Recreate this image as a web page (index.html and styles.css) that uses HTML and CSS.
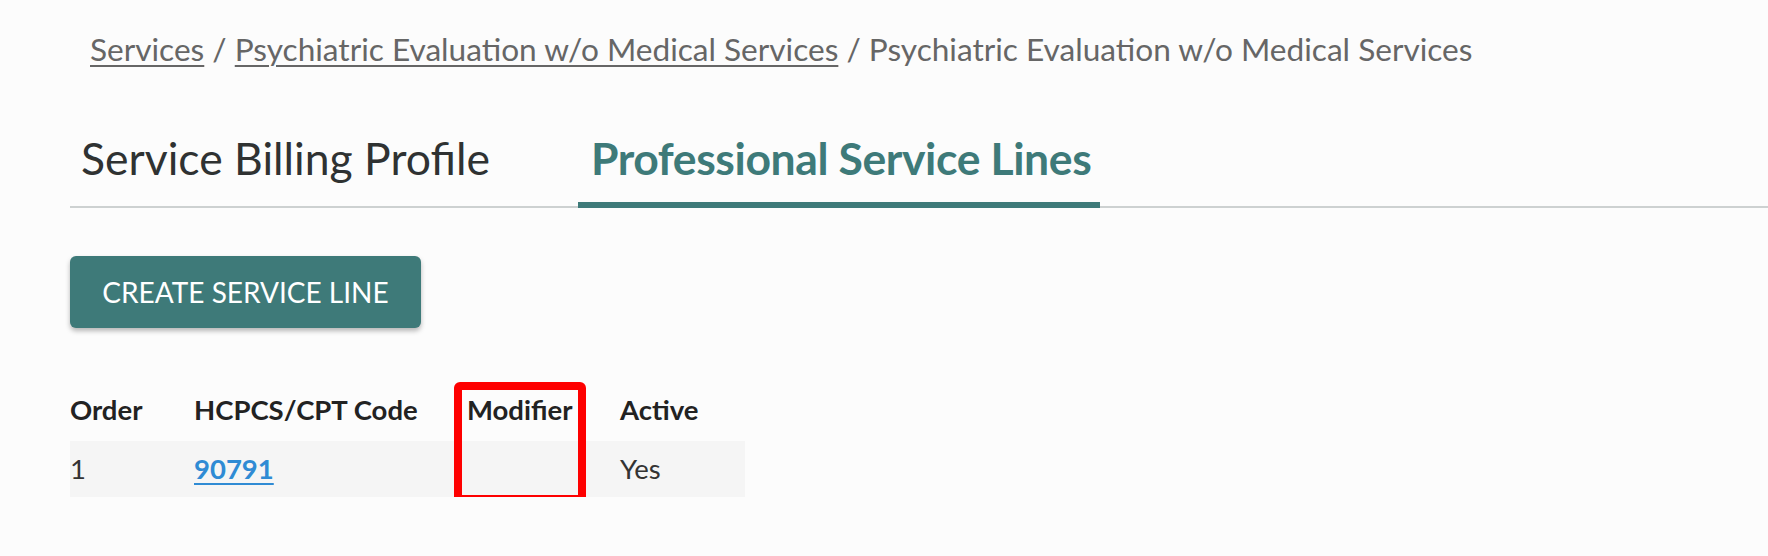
FILE: index.html
```html
<!DOCTYPE html>
<html lang="en">
<head>
<meta charset="utf-8">
<title>Professional Service Lines</title>
<link rel="stylesheet" href="styles.css">
</head>
<body>
<main class="page">
  <nav class="breadcrumb">
    <a href="#" class="crumb-link">Services</a> / <a href="#" class="crumb-link">Psychiatric Evaluation w/o Medical Services</a> / <span class="crumb-current">Psychiatric Evaluation w/o Medical Services</span>
  </nav>

  <div class="tabs">
    <div class="tab">Service Billing Profile</div>
    <div class="tab tab-active">Professional Service Lines</div>
  </div>

  <button class="btn-create" type="button">Create Service Line</button>

  <div class="table-wrap">
    <table class="lines">
      <colgroup>
        <col class="c-order">
        <col class="c-code">
        <col class="c-mod">
        <col class="c-active">
      </colgroup>
      <thead>
        <tr>
          <th>Order</th>
          <th>HCPCS/CPT Code</th>
          <th>Modifier</th>
          <th>Active</th>
        </tr>
      </thead>
      <tbody>
        <tr>
          <td>1</td>
          <td><a href="#" class="code-link">90791</a></td>
          <td></td>
          <td>Yes</td>
        </tr>
      </tbody>
    </table>
    <div class="highlight"></div>
  </div>
</main>
</body>
</html>
```

FILE: styles.css
```css
html, body {
  margin: 0;
  padding: 0;
  background: #fcfcfc;
}

body {
  font-family: Lato, "Open Sans", "Liberation Sans", sans-serif;
  color: #333;
}

.page {
  padding-left: 70px;
}

.breadcrumb {
  padding-top: 30px;
  padding-left: 20px;
  font-size: 31.6px;
  line-height: 38px;
  color: #666;
}

.crumb-link {
  color: #666;
  text-decoration: underline;
  text-decoration-thickness: 2px;
  text-underline-offset: 4px;
}

.crumb-current {
  color: #666;
}

.tabs {
  display: flex;
  gap: 77px;
  margin-top: 63px;
  border-bottom: 2px solid #cdd1d1;
}

.tab {
  padding: 0 11px 17px;
  font-size: 44.5px;
  line-height: 54px;
  color: #2f3232;
  border-bottom: 6px solid transparent;
  margin-bottom: -2px;
}

.tab-active {
  color: #3e7a79;
  font-weight: 700;
  letter-spacing: -0.4px;
  border-bottom-color: #3e7a79;
  padding-left: 13px;
  padding-right: 9px;
}

.btn-create {
  display: block;
  margin-top: 48px;
  width: 351px;
  height: 72px;
  padding: 0;
  border: none;
  border-radius: 6px;
  background: #3e7a79;
  color: #fff;
  font-family: Lato, "Open Sans", "Liberation Sans", sans-serif;
  font-size: 28px;
  line-height: 72px;
  text-transform: uppercase;
  box-shadow: 0 3px 5px rgba(0, 0, 0, 0.28);
}

.table-wrap {
  position: relative;
  margin-top: 53px;
  width: 675px;
}

.lines {
  border-collapse: collapse;
  width: 675px;
  table-layout: fixed;
  font-size: 27.5px;
  line-height: 36px;
}

.c-order { width: 124px; }
.c-code { width: 273px; }
.c-mod { width: 153px; }
.c-active { width: 125px; }

.lines th {
  text-align: left;
  font-weight: 700;
  color: #222;
  padding: 11px 0 13px;
}

.lines td {
  padding: 10px 0 10px;
  color: #333;
  background: #f5f5f5;
}

.code-link {
  color: #2f8bd4;
  font-weight: 700;
  text-decoration: underline;
  text-decoration-thickness: 2px;
  text-underline-offset: 4px;
}

.highlight {
  position: absolute;
  left: 384px;
  top: 1px;
  bottom: -6px;
  width: 116px;
  border: 8px solid #fe0000;
  border-radius: 6px;
}
```
